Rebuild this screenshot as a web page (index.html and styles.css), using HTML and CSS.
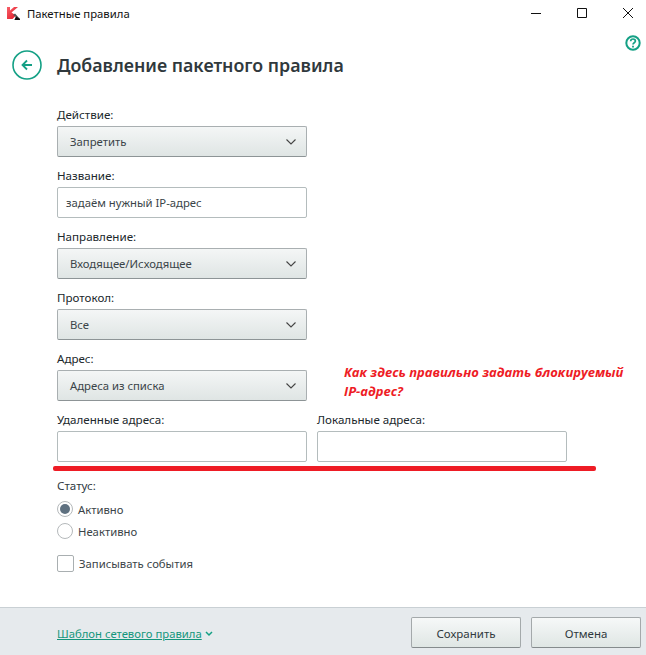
FILE: index.html
```html
<!DOCTYPE html>
<html lang="ru">
<head>
  <meta charset="UTF-8">
  <title>Пакетные правила</title>
  <link rel="stylesheet" href="styles.css">
</head>
<body>
  <div class="window">
    <div class="titlebar">
      <svg class="logo" width="13" height="14" viewBox="0 0 13 14">
        <defs>
          <linearGradient id="logo-red" x1="0" y1="0" x2="1" y2="1">
            <stop offset="0" stop-color="#f8606a"/>
            <stop offset="1" stop-color="#e01622"/>
          </linearGradient>
        </defs>
        <path d="M0 1h3v3.500L7 1h4L4.500 6.500 9 9.500 5.500 13H0z" fill="url(#logo-red)"/>
        <path d="M6 9 8 7.500l5 5.500v1H7.500L9 11z" fill="#555"/>
        <path d="M9 10.500 13 13v1H7.500z" fill="#111"/>
      </svg>
      <span class="window-title">Пакетные правила</span>
      <div class="controls">
        <svg width="12" height="12" viewBox="0 0 12 12"><path d="M1 6.500h10" stroke="#111" fill="none"/></svg>
        <svg width="12" height="12" viewBox="0 0 12 12"><path d="M1.500 1.500h9v9h-9z" stroke="#111" fill="none"/></svg>
        <svg width="12" height="12" viewBox="0 0 12 12"><path d="M1 1l10 10M11 1 1 11" stroke="#111" fill="none"/></svg>
      </div>
    </div>

    <svg class="help" width="16" height="16" viewBox="0 0 16 16">
      <circle cx="8" cy="8" r="6.700" fill="none" stroke="#14a085" stroke-width="2"/>
      <path d="M5.700 6.300c0-3 4.700-3 4.700-.2 0 1.700-2.400 1.700-2.400 3.500" fill="none" stroke="#14a085" stroke-width="1.700"/>
      <path d="M7.100 10.700h1.800v1.700H7.100z" fill="#14a085"/>
    </svg>

    <div class="heading">
      <svg class="back" width="30" height="30" viewBox="0 0 30 30">
        <circle cx="15" cy="15" r="14" fill="none" stroke="#14a085" stroke-width="1.600"/>
        <path d="M15 10.500 10.500 15l4.500 4.500M10.500 15H20" fill="none" stroke="#14a085" stroke-width="1.800"/>
      </svg>
      <h1>Добавление пакетного правила</h1>
    </div>

    <div class="form">
      <div class="field">
        <label>Действие:</label>
        <div class="select"><span>Запретить</span>
          <svg width="10" height="6" viewBox="0 0 10 6"><path d="M.5.500 5 5 9.500.500" fill="none" stroke="#444" stroke-width="1.100"/></svg>
        </div>
      </div>
      <div class="field">
        <label>Название:</label>
        <div class="input">задаём нужный IP-адрес</div>
      </div>
      <div class="field">
        <label>Направление:</label>
        <div class="select"><span>Входящее/Исходящее</span>
          <svg width="10" height="6" viewBox="0 0 10 6"><path d="M.5.500 5 5 9.500.500" fill="none" stroke="#444" stroke-width="1.100"/></svg>
        </div>
      </div>
      <div class="field">
        <label>Протокол:</label>
        <div class="select"><span>Все</span>
          <svg width="10" height="6" viewBox="0 0 10 6"><path d="M.5.500 5 5 9.500.500" fill="none" stroke="#444" stroke-width="1.100"/></svg>
        </div>
      </div>
      <div class="field">
        <label>Адрес:</label>
        <div class="select"><span>Адреса из списка</span>
          <svg width="10" height="6" viewBox="0 0 10 6"><path d="M.5.500 5 5 9.500.500" fill="none" stroke="#444" stroke-width="1.100"/></svg>
        </div>
      </div>
      <div class="field-row">
        <div class="field">
          <label>Удаленные адреса:</label>
          <div class="input"></div>
        </div>
        <div class="field">
          <label>Локальные адреса:</label>
          <div class="input"></div>
        </div>
      </div>

      <div class="status">
        <div class="status-label">Статус:</div>
        <div class="option"><span class="radio checked"></span>Активно</div>
        <div class="option"><span class="radio"></span>Неактивно</div>
      </div>
      <div class="option log"><span class="checkbox"></span>Записывать события</div>
    </div>

    <!-- пометка поверх скриншота -->
    <div class="note">Как здесь правильно задать блокируемый IP-адрес?</div>
    <div class="red-line"></div>

    <div class="footer">
      <a class="template-link">Шаблон сетевого правила</a>
      <svg class="link-arrow" width="8" height="6" viewBox="0 0 8 6"><path d="M1 1l3 3 3-3" fill="none" stroke="#14a085" stroke-width="1.500"/></svg>
      <div class="buttons">
        <div class="button">Сохранить</div>
        <div class="button">Отмена</div>
      </div>
    </div>
  </div>
</body>
</html>
```

FILE: styles.css
```css
html, body {
  margin: 0;
  padding: 0;
}
body {
  font-family: "Noto Sans", "Open Sans", sans-serif;
  font-size: 12px;
  color: #2f3a3f;
  background: #fff;
}
.window {
  position: relative;
  width: 646px;
  height: 655px;
  display: flex;
  flex-direction: column;
  overflow: hidden;
}
.titlebar {
  height: 26px;
  display: flex;
  align-items: center;
  padding-left: 7px;
}
.logo {
  margin-right: 7px;
}
.window-title {
  font-size: 11.300px;
  color: #111;
}
.controls {
  margin-left: auto;
  display: flex;
  gap: 34px;
  padding-right: 12px;
}
.help {
  position: absolute;
  top: 35px;
  left: 625px;
}
.heading {
  display: flex;
  align-items: center;
  gap: 15px;
  margin-top: 23px;
  padding-left: 12px;
  height: 32px;
}
.heading h1 {
  margin: 0;
  font-size: 17.800px;
  font-weight: 600;
  color: #30393d;
}
.form {
  padding: 24px 0 0 57px;
  display: flex;
  flex-direction: column;
}
.field {
  width: 250px;
  margin-bottom: 9px;
}
.field label {
  display: block;
  height: 21px;
  line-height: 20px;
  font-size: 11.600px;
  color: #20282c;
}
.select, .input {
  box-sizing: border-box;
  height: 31px;
  border-radius: 2px;
  display: flex;
  align-items: center;
  font-size: 11.300px;
  color: #3a4448;
}
.select {
  justify-content: space-between;
  padding: 0 10px 0 12px;
  border: 1px solid #a9afb1;
  border-bottom-color: #8d9496;
  background: linear-gradient(#f4f6f6, #dfe5e4);
}
.input {
  padding: 0 8px;
  border: 1px solid #b4bcbd;
  background: #fff;
}
.field-row {
  display: flex;
  gap: 10px;
}
.status {
  margin-top: 6px;
}
.status-label {
  height: 21px;
  line-height: 18px;
  font-size: 11.600px;
}
.option {
  display: flex;
  align-items: center;
  gap: 5px;
  height: 22px;
  font-size: 11.300px;
  color: #3a4448;
}
.radio {
  box-sizing: border-box;
  width: 16px;
  height: 16px;
  border: 1px solid #b5b9bb;
  border-radius: 50%;
  background: #fff;
  display: flex;
  align-items: center;
  justify-content: center;
}
.radio.checked::after {
  content: "";
  width: 10px;
  height: 10px;
  border-radius: 50%;
  background: #5f7180;
}
.log {
  margin-top: 10px;
}
.checkbox {
  box-sizing: border-box;
  width: 17px;
  height: 17px;
  border: 1px solid #a9afb1;
  border-radius: 2px;
  background: #fff;
}
.note {
  position: absolute;
  left: 344px;
  top: 363px;
  width: 290px;
  font-family: "Open Sans", "Noto Sans", sans-serif;
  font-size: 13px;
  line-height: 19px;
  font-weight: 700;
  font-style: italic;
  color: #ee1c25;
}
.red-line {
  position: absolute;
  left: 53px;
  top: 466px;
  width: 543px;
  height: 5px;
  border-radius: 2px;
  background: #ee1c25;
}
.footer {
  margin-top: auto;
  box-sizing: border-box;
  height: 48px;
  border-top: 1px solid #c9d0d4;
  background: #e6eaed;
  display: flex;
  align-items: center;
  padding: 0 5px 0 57px;
}
.template-link {
  margin-top: 3px;
  font-size: 11.300px;
  color: #14967c;
  text-decoration: underline;
}
.link-arrow {
  margin-left: 3px;
  margin-top: 5px;
}
.buttons {
  margin-left: auto;
  display: flex;
  gap: 10px;
  margin-top: 2px;
}
.button {
  box-sizing: border-box;
  width: 110px;
  height: 31px;
  padding-top: 2px;
  border: 1px solid #a4a9ab;
  border-bottom-color: #858b8d;
  border-radius: 2px;
  background: linear-gradient(#f6f8f8, #dfe6e4);
  display: flex;
  align-items: center;
  justify-content: center;
  font-size: 11.500px;
  color: #30393d;
}
```
